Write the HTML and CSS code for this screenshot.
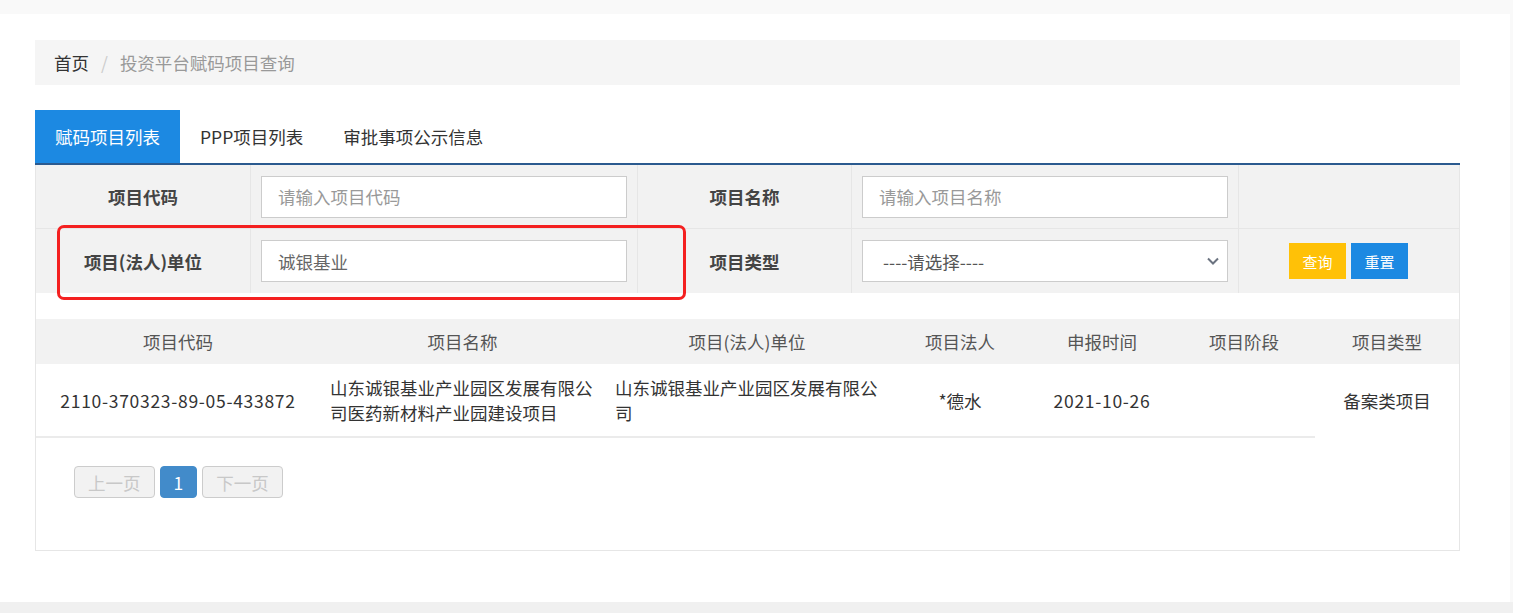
FILE: index.html
```html
<!DOCTYPE html>
<html lang="zh-CN">
  <head>
    <meta charset="UTF-8" />
    <title>投资平台赋码项目查询</title>
    <link rel="stylesheet" href="styles.css">
  </head>
  <body>
    <div class="page">
      <div class="crumb">
        <span class="crumb-home">首页</span>
        <span class="crumb-sep">/</span>
        <span class="crumb-current">投资平台赋码项目查询</span>
      </div>

      <div class="tabs">
        <div class="tab active">赋码项目列表</div>
        <div class="tab">PPP项目列表</div>
        <div class="tab">审批事项公示信息</div>
      </div>

      <div class="panel">
        <div class="search">
          <div class="cell label">项目代码</div>
          <div class="cell field">
            <input class="input" type="text" placeholder="请输入项目代码" />
          </div>
          <div class="cell label">项目名称</div>
          <div class="cell field">
            <input class="input" type="text" placeholder="请输入项目名称" />
          </div>
          <div class="cell"></div>

          <div class="cell label last-row">项目(法人)单位</div>
          <div class="cell field last-row">
            <input class="input" type="text" value="诚银基业" />
          </div>
          <div class="cell label last-row">项目类型</div>
          <div class="cell field last-row">
            <div class="select-wrap">
              <select class="select">
                <option>----请选择----</option>
              </select>
              <svg class="chevron" width="12" height="8" viewBox="0 0 12 8">
                <path d="M1 1.5l5 5 5-5" fill="none" stroke="#6b7380" stroke-width="2" />
              </svg>
            </div>
          </div>
          <div class="cell actions last-row">
            <button class="btn btn-query">查询</button>
            <button class="btn btn-reset">重置</button>
          </div>

          <!-- 标注框 -->
          <div class="mark"></div>
        </div>

        <table class="grid">
          <colgroup>
            <col style="width: 284px" />
            <col style="width: 285px" />
            <col style="width: 284px" />
            <col style="width: 142px" />
            <col style="width: 142px" />
            <col style="width: 142px" />
            <col style="width: 144px" />
          </colgroup>
          <thead>
            <tr>
              <th>项目代码</th>
              <th>项目名称</th>
              <th>项目(法人)单位</th>
              <th>项目法人</th>
              <th>申报时间</th>
              <th>项目阶段</th>
              <th>项目类型</th>
            </tr>
          </thead>
          <tbody>
            <tr>
              <td class="num">2110-370323-89-05-433872</td>
              <td class="left">山东诚银基业产业园区发展有限公司医药新材料产业园建设项目</td>
              <td class="left">山东诚银基业产业园区发展有限公司</td>
              <td>*德水</td>
              <td class="num">2021-10-26</td>
              <td></td>
              <td class="no-line">备案类项目</td>
            </tr>
          </tbody>
        </table>

        <div class="pager">
          <span class="page-btn disabled">上一页</span>
          <span class="page-btn current">1</span>
          <span class="page-btn disabled">下一页</span>
        </div>
      </div>
    </div>
    <div class="footer"></div>
  </body>
</html>
```

FILE: styles.css
```css
* {
  margin: 0;
  padding: 0;
  box-sizing: border-box;
}

body {
  width: 1513px;
  height: 613px;
  overflow: hidden;
  background: #f9f9f9;
  font-family: "Noto Sans CJK SC", "Noto Sans", sans-serif;
  font-size: 17.5px;
  line-height: 25px;
  color: #333;
}

.page {
  width: 1510px;
  height: 588px;
  margin-top: 14px;
  background: #fff;
  padding: 26px 0 0 35px;
}

.footer {
  height: 11px;
  background: #f0f0f0;
}

/* 面包屑 */
.crumb {
  width: 1425px;
  height: 45px;
  background: #f5f5f5;
  padding-left: 19px;
  display: flex;
  align-items: center;
}

.crumb-home {
  color: #333;
}

.crumb-sep {
  color: #ccc;
  margin: 0 12px;
}

.crumb-current {
  color: #999;
}

/* 选项卡 */
.tabs {
  width: 1425px;
  height: 55px;
  margin-top: 25px;
  display: flex;
  border-bottom: 2px solid #2b5a8f;
}

.tab {
  height: 53px;
  padding: 0 20px;
  display: flex;
  align-items: center;
  color: #333;
}

.tab.active {
  background: #1c89e2;
  color: #fff;
}

/* 面板 */
.panel {
  width: 1425px;
  height: 386px;
  border: 1px solid #e6e6e6;
  border-top: none;
}

.search {
  position: relative;
  display: grid;
  grid-template-columns: 215px 387px 214px 387px 220px;
  grid-template-rows: 64px 64px;
  background: #f2f2f2;
}

.cell {
  border-right: 1px solid #e6e6e6;
  border-bottom: 1px solid #e6e6e6;
  display: flex;
  align-items: center;
}

.cell:nth-child(5n) {
  border-right: none;
}

.cell.last-row {
  border-bottom: none;
}

.label {
  justify-content: center;
  font-weight: bold;
  color: #444;
}

.field {
  padding: 0 10px;
}

.input,
.select {
  width: 366px;
  height: 42px;
  border: 1px solid #ccc;
  background: #fff;
  padding: 0 16px;
  font-family: inherit;
  font-size: 17.5px;
  color: #666;
  outline: none;
}

.input::placeholder {
  color: #999;
}

.select-wrap {
  position: relative;
}

.select {
  appearance: none;
  padding-left: 20px;
  color: #555;
}

.chevron {
  position: absolute;
  right: 9px;
  top: 17px;
}

.actions {
  padding-left: 50px;
  gap: 5px;
}

.btn {
  width: 57px;
  height: 36px;
  border: none;
  color: #fff;
  font-family: inherit;
  font-size: 15px;
}

.btn-query {
  background: #ffc107;
}

.btn-reset {
  background: #1c89e2;
}

.mark {
  position: absolute;
  left: 21px;
  top: 60px;
  width: 629px;
  height: 75px;
  border: 3px solid #f42020;
  border-radius: 7px;
}

/* 列表 */
.grid {
  margin-top: 26px;
  width: 1423px;
  table-layout: fixed;
  border-collapse: collapse;
}

.grid th {
  height: 45px;
  background: #f2f2f2;
  font-weight: normal;
  color: #555;
  text-align: center;
  padding: 0 10px;
}

.grid td {
  height: 73px;
  padding: 10px;
  text-align: center;
  color: #333;
  border-bottom: 2px solid #ebebeb;
  vertical-align: middle;
}

.grid td.num {
  letter-spacing: 0.7px;
}

.grid td.left {
  text-align: left;
}

.grid td.no-line {
  border-bottom: none;
}

/* 分页 */
.pager {
  display: flex;
  gap: 5px;
  margin: 28px 0 0 38px;
}

.page-btn {
  height: 32px;
  padding: 0 13px;
  border: 1px solid #ccc;
  border-radius: 4px;
  display: flex;
  align-items: center;
}

.page-btn.disabled {
  background: #f2f2f2;
  color: #c8c8c8;
}

.page-btn.current {
  background: #428bca;
  border-color: #428bca;
  color: #fff;
}
```
